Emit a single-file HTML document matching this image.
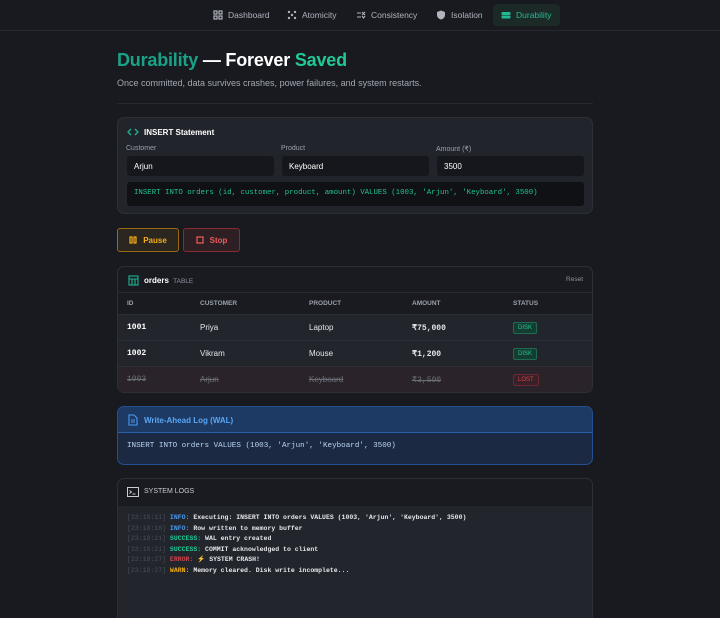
<!DOCTYPE html>
<html><head><meta charset="utf-8"><style>
*{box-sizing:border-box;margin:0;padding:0}
html,body{width:720px;height:618px;overflow:hidden}
body{background:#181a20;font-family:"Liberation Sans",sans-serif;color:#e5e7eb;position:relative}
.nav{position:absolute;top:0;left:0;width:720px;height:31px;border-bottom:1px solid #262932;background:#181a20}
.ni{position:absolute;top:4px;height:22px;display:flex;align-items:center;font-size:8.5px;color:#aeb3bd;gap:5px;padding:0 8px}
.ni svg{width:10px;height:10px}
.ni.act{background:#1c2a27;color:#22b894;border-radius:4px}
.abs{position:absolute}
h1{position:absolute;left:117px;top:50px;font-size:18px;font-weight:bold;color:#fff;letter-spacing:-.2px}
.sub{position:absolute;left:117px;top:78px;font-size:9px;color:#a3a8b2}
.hr{position:absolute;left:117px;top:103px;width:476px;height:1px;background:#262932}
.card{position:absolute;left:117px;width:476px;border:1px solid #2b2f38;border-radius:7px;background:#21242b;overflow:hidden}
.lbl{position:absolute;font-size:7px;color:#9aa0aa}
.inp{position:absolute;height:20px;background:#15171c;border-radius:3px;font-size:8px;color:#fff;padding:6px 7px}
.mono{font-family:"Liberation Mono",monospace}
.btn{position:absolute;top:228px;height:24px;border-radius:3px;font-size:8px;font-weight:bold;display:flex;align-items:center;justify-content:center;gap:6px}
.th{position:absolute;top:33px;font-size:6.5px;color:#9aa0aa;font-weight:bold}
.row{position:absolute;left:0;width:476px;height:26px;border-top:1px solid #2b2f38;font-size:8px}
.row span{position:absolute;top:8px}
.lost span{text-decoration:line-through}
.badge{font-size:6px;padding:2px 4px;border-radius:2px;top:7px!important;text-decoration:none!important}
.log{font-family:"Liberation Mono",monospace;font-size:6.5px;line-height:10.6px;color:#e5e7eb;font-weight:bold}
.t{color:#4a4f5a;font-weight:normal}
</style></head><body>
<div class="nav">
<div class="ni" style="left:205px"><svg viewBox="0 0 10 10" fill="none" stroke="#aeb3bd" stroke-width="1.2"><rect x="1" y="1" width="3" height="3"/><rect x="6" y="1" width="3" height="3"/><rect x="1" y="6" width="3" height="3"/><rect x="6" y="6" width="3" height="3"/></svg>Dashboard</div>
<div class="ni" style="left:279px"><svg viewBox="0 0 10 10" fill="#aeb3bd"><circle cx="2" cy="2" r="1.2"/><circle cx="8" cy="2" r="1.2"/><circle cx="5" cy="5" r="1.2"/><circle cx="2" cy="8" r="1.2"/><circle cx="8" cy="8" r="1.2"/></svg>Atomicity</div>
<div class="ni" style="left:348px"><svg viewBox="0 0 10 10" fill="none" stroke="#aeb3bd" stroke-width="1.1"><path d="M1 3h4M1 7h4M6 2l3 3M9 2l-3 3M6 6l1.5 2L9 6"/></svg>Consistency</div>
<div class="ni" style="left:428px"><svg viewBox="0 0 10 10" fill="#aeb3bd"><path d="M5 0.5L9 2v3c0 2.5-2 4-4 4.5C3 9 1 7.5 1 5V2z"/></svg>Isolation</div>
<div class="ni act" style="left:493px;width:67px"><svg viewBox="0 0 10 10" fill="#22b894"><rect x="0.5" y="2" width="9" height="3" rx="1"/><rect x="0.5" y="5.5" width="9" height="3" rx="1"/></svg>Durability</div>
</div>
<h1><span style="color:#1aa287">Durability</span> — Forever <span style="color:#20c997">Saved</span></h1>
<div class="sub">Once committed, data survives crashes, power failures, and system restarts.</div>
<div class="hr"></div>

<div class="card" style="top:117px;height:97px">
<svg class="abs" style="left:9px;top:9px" width="12" height="10" viewBox="0 0 12 10" fill="none" stroke="#20b391" stroke-width="1.3"><path d="M4 2L1 5l3 3M8 2l3 3-3 3"/></svg>
<div class="abs" style="left:26px;top:10px;font-size:8px;font-weight:bold;color:#fff">INSERT Statement</div>
<div class="lbl" style="left:8px;top:27px">Customer</div>
<div class="lbl" style="left:163px;top:27px">Product</div>
<div class="lbl" style="left:318px;top:27px">Amount (₹)</div>
<div class="inp" style="left:9px;top:38px;width:147px">Arjun</div>
<div class="inp" style="left:164px;top:38px;width:147px">Keyboard</div>
<div class="inp" style="left:319px;top:38px;width:147px">3500</div>
<div class="inp mono" style="left:9px;top:64px;width:457px;height:24px;background:#0f1114;color:#22c28f;font-size:7.4px;padding-top:7px">INSERT INTO orders (id, customer, product, amount) VALUES (1003, 'Arjun', 'Keyboard', 3500)</div>
</div>

<div class="btn" style="left:117px;width:62px;background:#2c2620;border:1px solid #9a6a12;color:#f5b014"><svg width="8" height="8" viewBox="0 0 8 8" fill="none" stroke="#f5b014" stroke-width="1.2"><rect x="1" y="1" width="2" height="6"/><rect x="5" y="1" width="2" height="6"/></svg>Pause</div>
<div class="btn" style="left:183px;width:57px;background:#2e1f25;border:1px solid #8a2a32;color:#f05a5a"><svg width="8" height="8" viewBox="0 0 8 8" fill="none" stroke="#f05a5a" stroke-width="1.2"><rect x="1" y="1" width="6" height="6"/></svg>Stop</div>

<div class="card" style="top:266px;height:127px;background:#191b21">
<svg class="abs" style="left:10px;top:8px" width="11" height="11" viewBox="0 0 11 11" fill="none" stroke="#20b391" stroke-width="1.1"><rect x="1" y="1" width="9" height="9"/><path d="M1 4h9M4 4v6M7 4v6"/></svg>
<div class="abs" style="left:26px;top:9px;font-size:8px;font-weight:bold;color:#fff">orders <span style="font-weight:normal;color:#8c92a0;font-size:6.5px;margin-left:2px">TABLE</span></div>
<div class="abs" style="right:9px;top:9px;font-size:6.5px;color:#8c92a0">Reset</div>
<div class="abs" style="left:0;top:25px;width:476px;height:1px;background:#262932"></div>
<div class="th" style="left:9px">ID</div><div class="th" style="left:82px">CUSTOMER</div><div class="th" style="left:191px">PRODUCT</div><div class="th" style="left:294px">AMOUNT</div><div class="th" style="left:395px">STATUS</div>
<div class="row" style="top:47px;background:#22252c"><span class="mono" style="left:9px;font-weight:bold;color:#fff">1001</span><span style="left:82px">Priya</span><span style="left:191px">Laptop</span><span class="mono" style="left:294px;font-weight:bold">₹75,000</span><span class="badge" style="left:395px;background:#143c31;border:1px solid #1f6b52;color:#20c997">DISK</span></div>
<div class="row" style="top:73px;background:#22252c"><span class="mono" style="left:9px;font-weight:bold;color:#fff">1002</span><span style="left:82px">Vikram</span><span style="left:191px">Mouse</span><span class="mono" style="left:294px;font-weight:bold">₹1,200</span><span class="badge" style="left:395px;background:#143c31;border:1px solid #1f6b52;color:#20c997">DISK</span></div>
<div class="row lost" style="top:99px;height:28px;background:#2a2329;color:#6c6f78"><span class="mono" style="left:9px">1003</span><span style="left:82px">Arjun</span><span style="left:191px">Keyboard</span><span class="mono" style="left:294px">₹3,500</span><span class="badge" style="left:395px;background:#3a2027;border:1px solid #6b2a33;color:#d0454f">LOST</span></div>
</div>

<div class="card" style="top:406px;height:59px;background:#1b2a42;border-color:#23508f">
<div class="abs" style="left:0;top:0;width:476px;height:26px;background:#1c3a63;border-bottom:1px solid #2a5fa8"></div>
<svg class="abs" style="left:10px;top:7px" width="10" height="12" viewBox="0 0 10 12" fill="none" stroke="#4a9af0" stroke-width="1.1"><path d="M1 1h5l3 3v7H1z M3 6h4M3 8h4"/></svg>
<div class="abs" style="left:26px;top:9px;font-size:8px;font-weight:bold;color:#5aa6f5">Write-Ahead Log (WAL)</div>
<div class="abs mono" style="left:9px;top:35px;font-size:7.6px;color:#b9d3f5">INSERT INTO orders VALUES (1003, 'Arjun', 'Keyboard', 3500)</div>
</div>

<div class="card" style="top:478px;height:150px;background:#22252c">
<div class="abs" style="left:0;top:0;width:476px;height:27px;background:#191b21"></div>
<svg class="abs" style="left:9px;top:8px" width="12" height="10" viewBox="0 0 12 10" fill="none" stroke="#c7cbd3" stroke-width="1"><rect x="0.5" y="0.5" width="11" height="9"/><path d="M2.5 3.5l2 1.5-2 1.5M5.5 7h3"/></svg>
<div class="abs" style="left:26px;top:9px;font-size:7px;color:#c7cbd3">SYSTEM LOGS</div>
<div class="abs log" style="left:9px;top:34px">
<div><span class="t">[23:18:11]</span> <span style="color:#4a9af0">INFO:</span> Executing: INSERT INTO orders VALUES (1003, 'Arjun', 'Keyboard', 3500)</div>
<div><span class="t">[23:18:16]</span> <span style="color:#4a9af0">INFO:</span> Row written to memory buffer</div>
<div><span class="t">[23:18:21]</span> <span style="color:#20c997">SUCCESS:</span> WAL entry created</div>
<div><span class="t">[23:18:21]</span> <span style="color:#20c997">SUCCESS:</span> COMMIT acknowledged to client</div>
<div><span class="t">[23:18:27]</span> <span style="color:#d0454f">ERROR:</span> <span style="color:#f58a3a">⚡</span> SYSTEM CRASH!</div>
<div><span class="t">[23:18:27]</span> <span style="color:#f5b014">WARN:</span> Memory cleared. Disk write incomplete...</div>
</div>
</div>
</body></html>
